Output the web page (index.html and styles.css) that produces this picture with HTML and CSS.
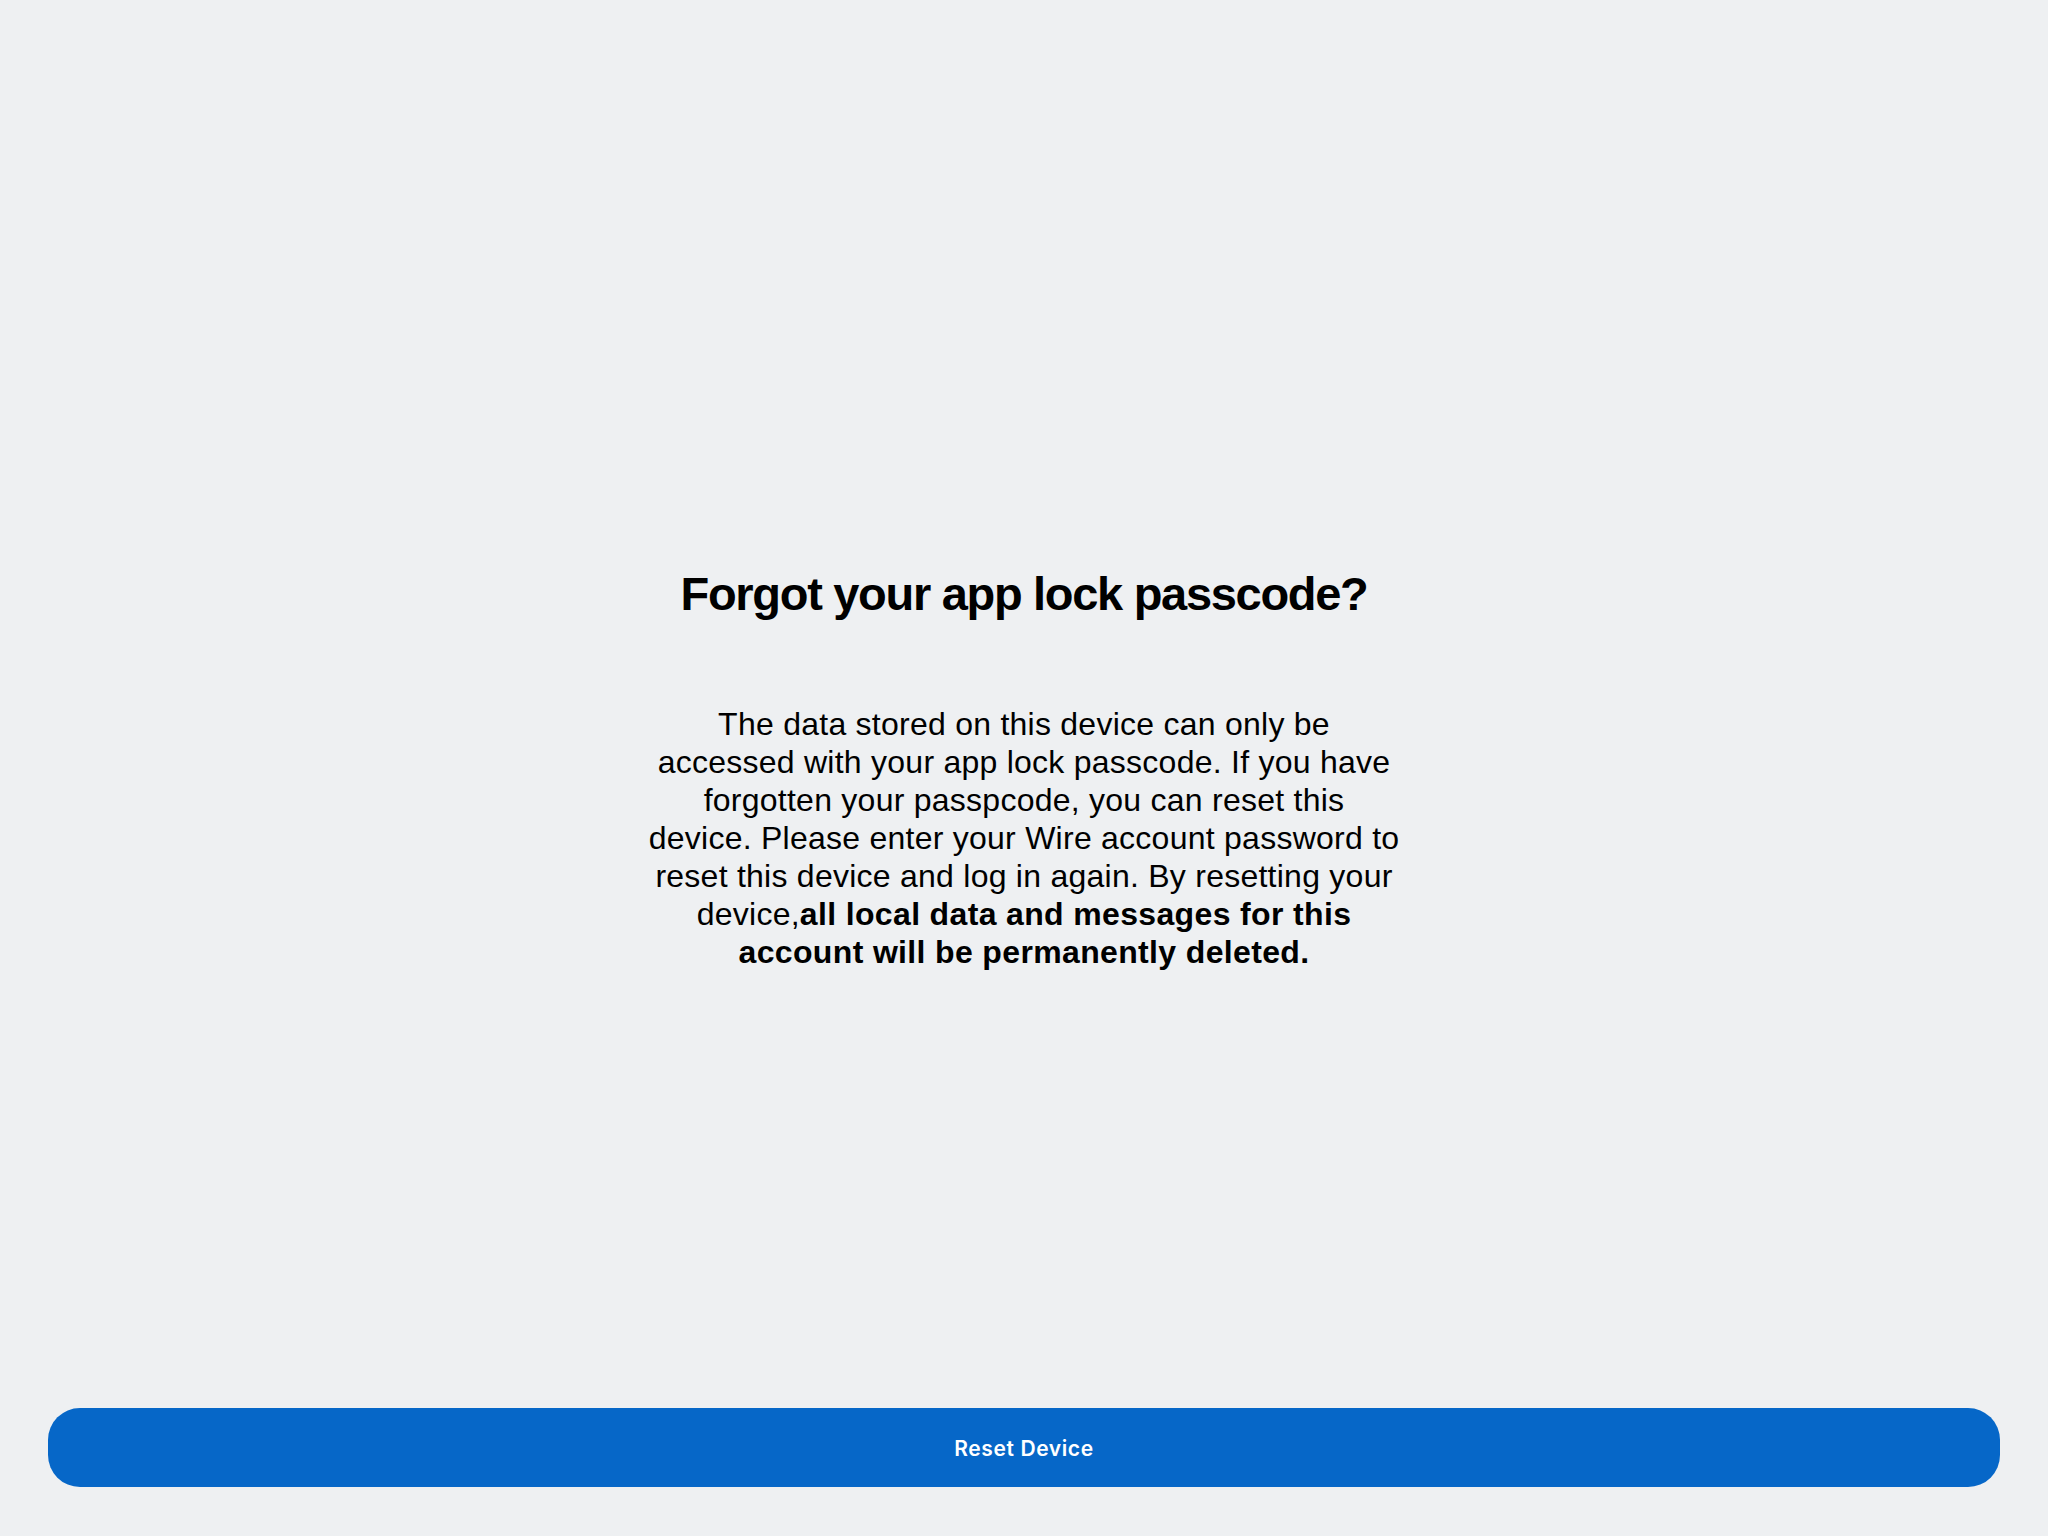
FILE: index.html
```html
<!DOCTYPE html>
<html lang="en">
<head>
<meta charset="utf-8">
<title>Forgot your app lock passcode?</title>
<link rel="stylesheet" href="styles.css">
</head>
<body>
<div class="screen">
  <main class="content">
    <h1 class="title">Forgot your app lock passcode?</h1>
    <p class="message">The data stored on this device can only be<br>accessed with your app lock passcode. If you have<br>forgotten your passpcode, you can reset this<br>device. Please enter your Wire account password to<br>reset this device and log in again. By resetting your<br>device,<strong>all local data and messages for this<br>account will be permanently deleted.</strong></p>
  </main>
  <footer class="footer">
    <button class="reset-button" type="button">Reset Device</button>
  </footer>
</div>
</body>
</html>
```

FILE: styles.css
```css
html, body {
  margin: 0;
  padding: 0;
  background: #EEF0F2;
}

.screen {
  height: 100vh;
  display: flex;
  flex-direction: column;
  color: #000;
  font-family: "Liberation Sans", Arial, sans-serif;
}

.content {
  flex: 1;
  display: flex;
  flex-direction: column;
  align-items: center;
  padding-top: 566px;
}

.title {
  margin: 0;
  font-size: 47px;
  line-height: 56px;
  font-weight: 700;
  letter-spacing: -1.3px;
  text-align: center;
}

.message {
  margin: 83px 0 0;
  max-width: 820px;
  font-size: 32px;
  line-height: 38px;
  letter-spacing: 0.25px;
  text-align: center;
  white-space: nowrap;
}

.message strong {
  font-weight: 700;
  letter-spacing: 0.35px;
}

.footer {
  padding: 0 48px 49px;
}

.reset-button {
  display: block;
  width: 100%;
  height: 79px;
  padding-top: 2px;
  border: none;
  border-radius: 32px;
  background: #0667C8;
  color: #fff;
  font-family: Inter, "Liberation Sans", sans-serif;
  font-size: 21px;
  font-weight: 600;
  letter-spacing: 0.6px;
  cursor: pointer;
}
```
